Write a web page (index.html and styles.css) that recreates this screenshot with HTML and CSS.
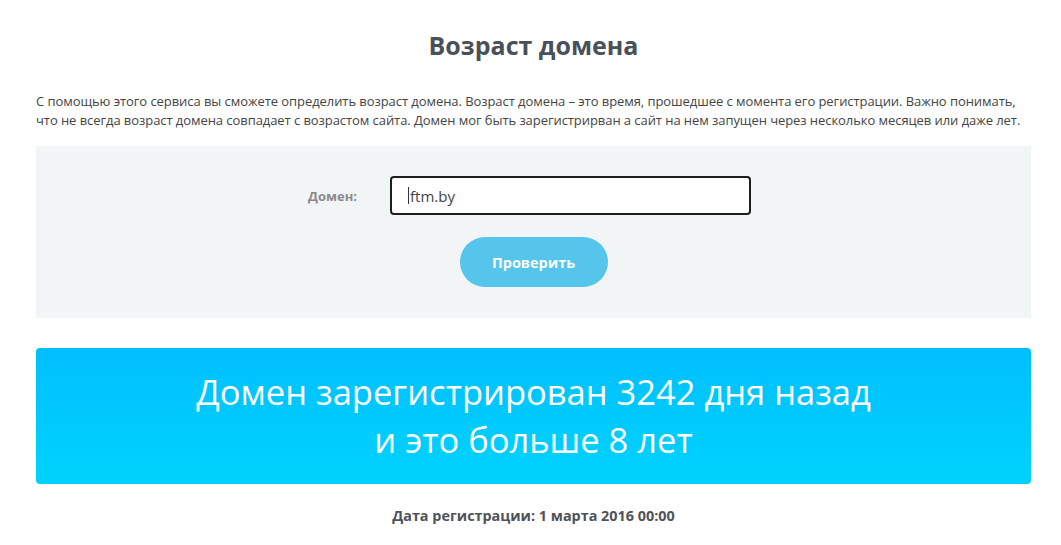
FILE: index.html
```html
<!DOCTYPE html>
<html lang="ru">
<head>
<meta charset="utf-8">
<title>Возраст домена</title>
<link rel="stylesheet" href="styles.css">
</head>
<body>
<div class="page">
  <h1 class="title">Возраст домена</h1>
  <p class="intro">С помощью этого сервиса вы сможете определить возраст домена. Возраст домена – это время, прошедшее с момента его регистрации. Важно понимать, что не всегда возраст домена совпадает с возрастом сайта. Домен мог быть зарегистрирван а сайт на нем запущен через несколько месяцев или даже лет.</p>
  <div class="panel">
    <div class="row">
      <label class="label" for="domain">Домен:</label>
      <div class="input"><span class="caret"></span>ftm.by</div>
    </div>
    <div class="actions">
      <button class="btn">Проверить</button>
    </div>
  </div>
  <div class="result">
    <div class="result-text">Домен зарегистрирован 3242 дня назад<br>и это больше 8 лет</div>
  </div>
  <div class="date">Дата регистрации: 1 марта 2016 00:00</div>
</div>
</body>
</html>
```
FILE: styles.css
```css
* { box-sizing: border-box; }
html, body { margin: 0; padding: 0; background: #fff; }
body { font-family: "Open Sans", "Liberation Sans", sans-serif; color: #444; }
.page { padding: 0 30px 0 36px; }
.title {
  margin: 0;
  padding-top: 30px;
  height: 60px;
  text-align: center;
  font-size: 25px;
  font-weight: 700;
  color: #4a5058;
  line-height: 30px;
}
.intro {
  margin: 32px 0 0;
  font-size: 13px;
  letter-spacing: -0.065px;
  line-height: 19px;
  color: #444;
  height: 54px;
}
.panel {
  background: #f2f5f6;
  height: 172px;
  padding: 30px 0 0 201px;
}
.row { display: flex; align-items: center; }
.label {
  width: 120px;
  text-align: right;
  margin-right: 33px;
  font-size: 13px;
  font-weight: 700;
  color: #8a8a8a;
}
.input {
  width: 361px;
  height: 39px;
  border: 2px solid #1e1e1e;
  border-radius: 4px;
  background: #fff;
  display: flex;
  align-items: center;
  padding-left: 16px;
  font-size: 15px;
  color: #444;
}
.caret { width: 1px; height: 17px; background: #333; margin-right: 1px; }
.actions { display: flex; justify-content: center; margin-top: 22px; margin-left: -201px; }
.btn {
  width: 148px;
  height: 50px;
  border: 0;
  border-radius: 25px;
  background: #55c5ec;
  color: #fff;
  font-family: inherit;
  font-size: 14.5px;
  font-weight: 700;
}
.result {
  margin-top: 30px;
  height: 136px;
  border-radius: 4px;
  background: linear-gradient(180deg, #00bfff 0%, #00d3fd 100%);
  display: flex;
  align-items: center;
  justify-content: center;
}
.result-text {
  text-align: center;
  color: #fff;
  font-size: 34.5px;
  font-weight: 400;
  line-height: 48px;
}
.date {
  margin-top: 22px;
  text-align: center;
  font-size: 14.4px;
  font-weight: 700;
  color: #4f5358;
}
```
